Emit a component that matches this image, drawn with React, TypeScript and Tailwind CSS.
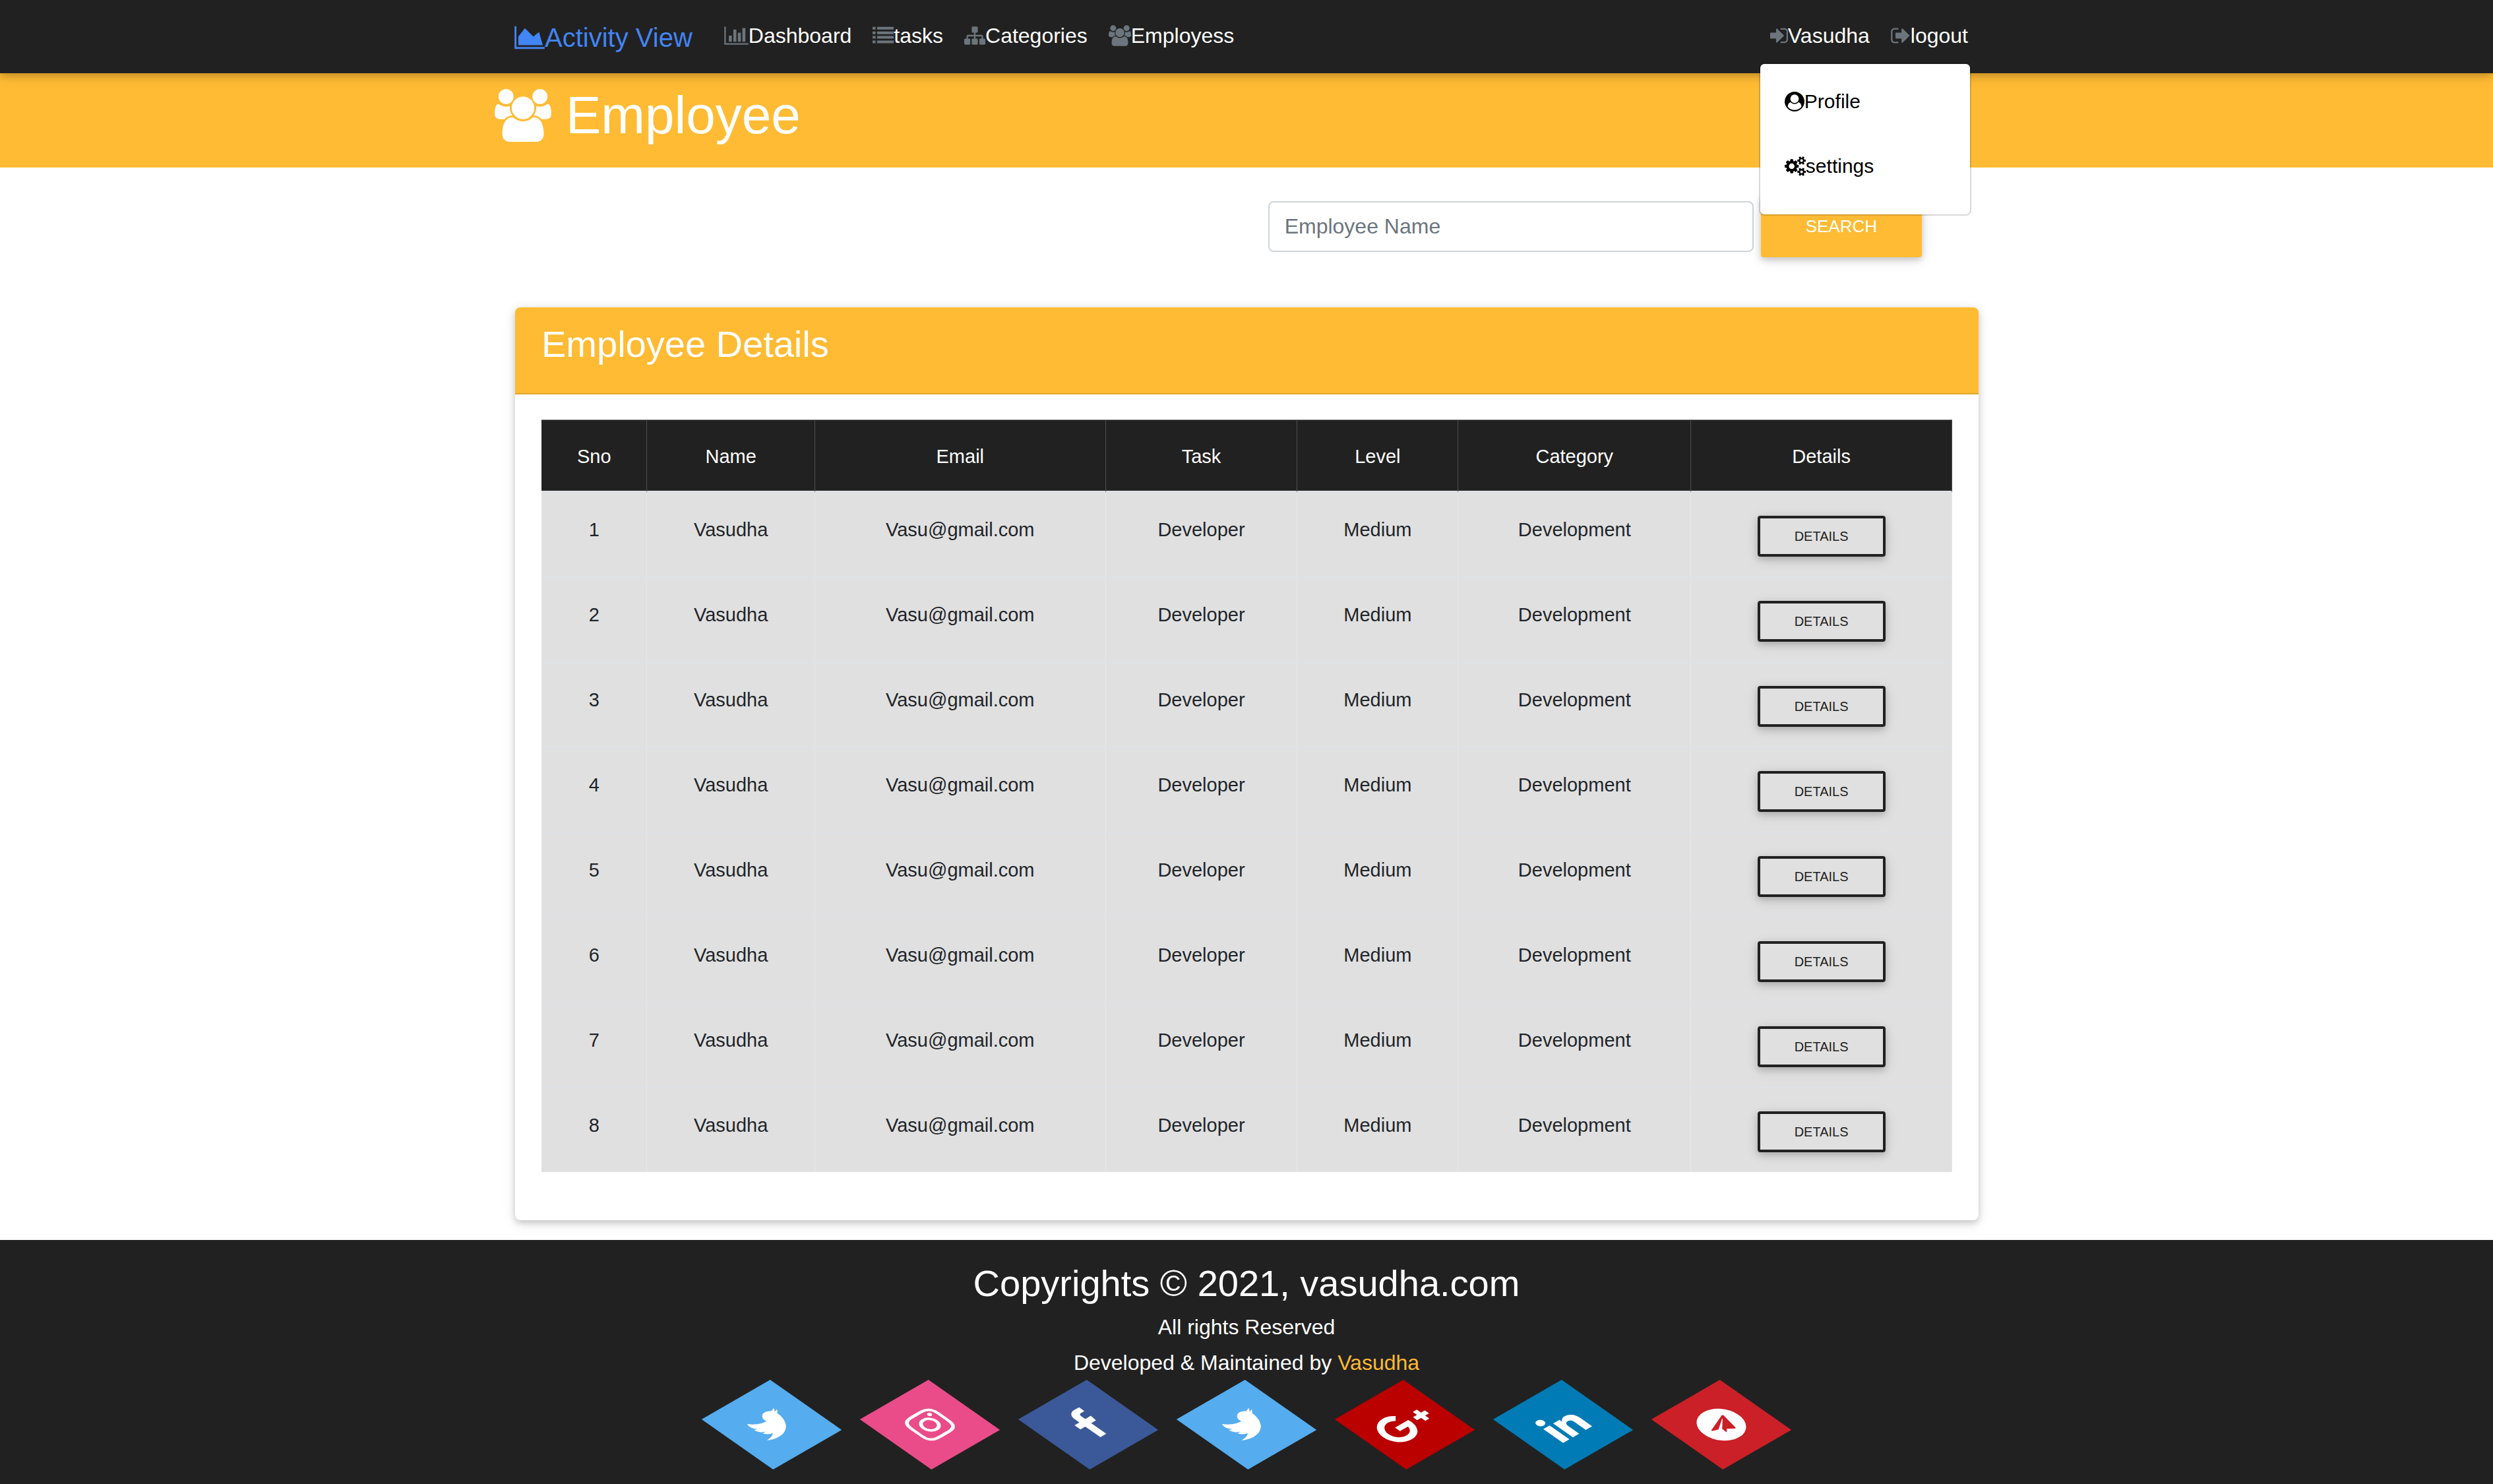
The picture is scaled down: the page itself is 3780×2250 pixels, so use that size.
type IconProps = { viewBox: string; d: string; className: string };

function Icon({ viewBox, d, className }: IconProps) {
  return (
    <svg viewBox={viewBox} className={className} fill="currentColor" aria-hidden="true">
      <path d={d} />
    </svg>
  );
}

const AREA =
  "M2048 1536v128h-2048v-1536h128v1408h1920zm-384-1024l256 896h-1664v-576l448-576 576 576z";
const BARS =
  "M640 896v512h-256v-512h256zm384-512v1024h-256v-1024h256zm1024 1152v128h-2048v-1536h128v1408h1920zm-640-896v768h-256v-768h256zm384-384v1152h-256v-1152h256z";
const LIST =
  "M0 160h256v224h-256zM384 160h1408v224h-1408zM0 544h256v224h-256zM384 544h1408v224h-1408zM0 928h256v224h-256zM384 928h1408v224h-1408zM0 1312h256v224h-256zM384 1312h1408v224h-1408z";
const SITEMAP =
  "M1792 1248v320q0 40-28 68t-68 28h-320q-40 0-68-28t-28-68v-320q0-40 28-68t68-28h96v-192h-512v192h96q40 0 68 28t28 68v320q0 40-28 68t-68 28h-320q-40 0-68-28t-28-68v-320q0-40 28-68t68-28h96v-192h-512v192h96q40 0 68 28t28 68v320q0 40-28 68t-68 28h-320q-40 0-68-28t-28-68v-320q0-40 28-68t68-28h96v-192q0-52 38-90t90-38h512v-192h-96q-40 0-68-28t-28-68v-320q0-40 28-68t68-28h320q40 0 68 28t28 68v320q0 40-28 68t-68 28h-96v192h512q52 0 90 38t38 90v192h96q40 0 68 28t28 68z";
const USERS =
  "M593 896q-162 5-265 128h-134q-82 0-138-40.5t-56-118.5q0-353 124-353 6 0 43.5 21t97.5 42.5 119 21.5q67 0 133-23-5 37-5 66 0 139 81 256zm1071 637q0 120-73 189.5t-194 69.5h-874q-121 0-194-69.5t-73-189.5q0-53 3.5-103.5t14-109 26.5-108.5 43-97.5 62-81 85.5-53.5 111.5-20q10 0 43 21.5t73 48 107 48 135 21.5 135-21.5 107-48 73-48 43-21.5q61 0 111.5 20t85.5 53.5 62 81 43 97.5 26.5 108.5 14 109 3.5 103.5zm-1024-1277q0 106-75 181t-181 75-181-75-75-181 75-181 181-75 181 75 75 181zm704 384q0 159-112.5 271.5t-271.5 112.5-271.5-112.5-112.5-271.5 112.5-271.5 271.5-112.5 271.5 112.5 112.5 271.5zm576 225q0 78-56 118.5t-138 40.5h-134q-103-123-265-128 81-117 81-256 0-29-5-66 66 23 133 23 59 0 119-21.5t97.5-42.5 43.5-21q124 0 124 353zm-128-609q0 106-75 181t-181 75-181-75-75-181 75-181 181-75 181 75 75 181z";
const SIGN_IN =
  "M1312 896q0 26-19 45l-544 544q-19 19-45 19t-45-19-19-45v-288h-448q-26 0-45-19t-19-45v-384q0-26 19-45t45-19h448v-288q0-26 19-45t45-19 45 19l544 544q19 19 19 45zm352-352v704q0 119-84.5 203.5t-203.5 84.5h-320q-13 0-22.5-9.5t-9.5-22.5q0-4-1-20t-.5-26.5 3-23.5 10-19.5 20.5-6.5h320q66 0 113-47t47-113v-704q0-66-47-113t-113-47h-312l-11.5-1-11.5-3-8-5.5-7-9-2-13.5q0-4-1-20t-.5-26.5 3-23.5 10-19.5 20.5-6.5h320q119 0 203.5 84.5t84.5 203.5z";
const SIGN_OUT =
  "M704 1440q0 4 1 20t.5 26.5-3 23.5-10 19.5-20.5 6.5h-320q-119 0-203.5-84.5t-84.5-203.5v-704q0-119 84.5-203.5t203.5-84.5h320q13 0 22.5 9.5t9.5 22.5q0 4 1 20t.5 26.5-3 23.5-10 19.5-20.5 6.5h-320q-66 0-113 47t-47 113v704q0 66 47 113t113 47h312l11.5 1 11.5 3 8 5.5 7 9 2 13.5zm928-544q0 26-19 45l-544 544q-19 19-45 19t-45-19-19-45v-288h-448q-26 0-45-19t-19-45v-384q0-26 19-45t45-19h448v-288q0-26 19-45t45-19 45 19l544 544q19 19 19 45z";
const USER_CIRCLE =
  "M1523 1339q-22-155-87.5-257.5t-184.5-118.5q-67 74-159.5 115.5t-195.5 41.5-195.5-41.5-159.5-115.5q-119 16-184.5 118.5t-87.5 257.5q106 150 271 237.5t356 87.5 356-87.5 271-237.5zm-243-699q0-159-112.5-271.5t-271.5-112.5-271.5 112.5-112.5 271.5 112.5 271.5 271.5 112.5 271.5-112.5 112.5-271.5zm512 256q0 182-71 347.5t-190.5 286-285.5 191.5-349 71-349-71-285.5-191.5-190.5-286-71-347.5 71-348 191-286 286-191 348-71 348 71 286 191 191 286 71 348z";
const COGS =
  "M896 896q0-106-75-181t-181-75-181 75-75 181 75 181 181 75 181-75 75-181zm768 512q0-52-38-90t-90-38-90 38-38 90q0 53 37.5 90.5t90.5 37.5 90.5-37.5 37.5-90.5zm0-1024q0-52-38-90t-90-38-90 38-38 90q0 53 37.5 90.5t90.5 37.5 90.5-37.5 37.5-90.5zm-384 421v185q0 10-7 19.5t-16 10.5l-155 24q-11 35-32 76 34 48 90 115 7 11 7 20 0 12-7 19-23 30-82.5 89.5t-78.5 59.5q-11 0-21-7l-115-90q-37 19-77 31-11 108-23 155-7 24-30 24h-186q-11 0-20-7.5t-10-17.5l-23-153q-34-10-75-31l-118 89q-7 7-20 7-11 0-21-8-144-133-144-160 0-9 7-19 10-14 41-53t47-61q-23-44-35-82l-152-24q-10-1-17-9.5t-7-19.5v-185q0-10 7-19.5t16-10.5l155-24q11-35 32-76-34-48-90-115-7-11-7-20 0-12 7-20 22-30 82-89t79-59q11 0 21 7l115 90q34-18 77-32 11-108 23-154 7-24 30-24h186q11 0 20 7.5t10 17.5l23 153q34 10 75 31l118-89q8-7 20-7 11 0 21 8 144 133 144 160 0 8-7 19-12 16-42 54t-45 60q23 48 34 82l152 23q10 2 17 10.5t7 19.5zm640 533v140q0 16-149 31-12 27-30 52 51 113 51 138 0 4-4 7-122 71-124 71-8 0-46-47t-52-68q-20 2-30 2t-30-2q-14 21-52 68t-46 47q-2 0-124-71-4-3-4-7 0-25 51-138-18-25-30-52-149-15-149-31v-140q0-16 149-31 13-29 30-52-51-113-51-138 0-4 4-7 4-2 35-20t59-34 30-16q8 0 46 46.5t52 67.5q20-2 30-2t30 2q51-71 92-112l6-2q4 0 124 70 4 3 4 7 0 25-51 138 17 23 30 52 149 15 149 31zm0-1024v140q0 16-149 31-12 27-30 52 51 113 51 138 0 4-4 7-122 71-124 71-8 0-46-47t-52-68q-20 2-30 2t-30-2q-14 21-52 68t-46 47q-2 0-124-71-4-3-4-7 0-25 51-138-18-25-30-52-149-15-149-31v-140q0-16 149-31 13-29 30-52-51-113-51-138 0-4 4-7 4-2 35-20t59-34 30-16q8 0 46 46.5t52 67.5q20-2 30-2t30 2q51-71 92-112l6-2q4 0 124 70 4 3 4 7 0 25-51 138 17 23 30 52 149 15 149 31z";
const TWITTER =
  "M1684 408q-67 98-162 167 1 14 1 42 0 130-38 259.5t-115.5 248.5-184.5 210.5-258 146-323 54.5q-271 0-496-145 35 4 78 4 225 0 401-138-105-2-188-64.5t-114-159.5q33 5 61 5 43 0 85-11-112-23-185.5-111.5t-73.5-205.5v-4q68 38 146 41-66-44-105-115t-39-154q0-88 44-163 121 149 294.5 238.5t371.5 99.5q-8-38-8-74 0-134 94.5-228.5t228.5-94.5q140 0 236 102 109-21 205-78-37 115-142 178 93-10 186-50z";
const INSTAGRAM =
  "M1152 896q0-106-75-181t-181-75-181 75-75 181 75 181 181 75 181-75 75-181zm138 0q0 164-115 279t-279 115-279-115-115-279 115-279 279-115 279 115 115 279zm108-410q0 38-27 65t-65 27-65-27-27-65 27-65 65-27 65 27 27 65zm-502-220q-7 0-76.5-.5t-105.5 0-96.5 3-103 10-71.5 18.5q-50 20-88 58t-58 88q-11 29-18.5 71.5t-10 103-3 96.5 0 105.5.5 76.5-.5 76.5 0 105.5 3 96.5 10 103 18.5 71.5q20 50 58 88t88 58q29 11 71.5 18.5t103 10 96.5 3 105.5 0 76.5-.5 76.5.5 105.5 0 96.5-3 103-10 71.5-18.5q50-20 88-58t58-88q11-29 18.5-71.5t10-103 3-96.5 0-105.5-.5-76.5.5-76.5 0-105.5-3-96.5-10-103-18.5-71.5q-20-50-58-88t-88-58q-29-11-71.5-18.5t-103-10-96.5-3-105.5 0-76.5.5zm768 630q0 229-5 317-10 208-124 322t-322 124q-88 5-317 5t-317-5q-208-10-322-124t-124-322q-5-88-5-317t5-317q10-208 124-322t322-124q88-5 317-5t317 5q208 10 322 124t124 322q5 88 5 317z";
const FACEBOOK =
  "M1343 12v264h-157q-86 0-116 36t-30 108v189h293l-39 296h-254v759h-306v-759h-255v-296h255v-218q0-186 104-288.5t277-102.5q147 0 228 12z";
const GOOGLE_PLUS =
  "M1437 913q0 208-87 370.5t-248 254-369 91.5q-149 0-285-58t-234-156-156-234-58-285 58-285 156-234 234-156 285-58q286 0 491 192l-199 191q-117-113-292-113-123 0-227.5 62t-165.5 168.5-61 232.5 61 232.5 165.5 168.5 227.5 62q83 0 152.5-23t114.5-57.5 78.5-78.5 49-83 21.5-74h-416v-252h692q12 63 12 122zm867-122v210h-209v209h-210v-209h-209v-210h209v-209h210v209h209z";
const LINKEDIN =
  "M477 625v991h-330v-991h330zm21-306q1 73-50.5 122t-135.5 49h-2q-82 0-132-49t-50-122q0-74 51.5-122.5t134.5-48.5 133 48.5 51 122.5zm1166 729v568h-329v-530q0-105-40.5-164.5t-126.5-59.5q-63 0-105.5 34.5t-63.5 85.5q-11 30-11 81v553h-329q2-399 2-647t-1-296l-1-48h329v144h-2q20-32 41-56t56.5-52 87-43.5 114.5-15.5q171 0 275 113.5t104 332.5z";
const TELEGRAM =
  "M1189 1307l147-693q9-44-10.5-63t-51.5-7l-864 333q-29 11-39.5 25t-2.5 26.5 32 19.5l221 69 513-323q21-14 32-6 7 5-4 15l-415 375-16 228q23 0 45-22l108-104 224 165q64 36 81-38zm603-411q0 182-71 348t-191 286-286 191-348 71-348-71-286-191-191-286-71-348 71-348 191-286 286-191 348-71 348 71 286 191 191 286 71 348z";

const navLinks = [
  { label: "Dashboard", viewBox: "0 0 2048 1792", d: BARS, size: "h-8 w-[37px] text-[#6c757d]" },
  { label: "tasks", viewBox: "0 0 1792 1792", d: LIST, size: "h-8 w-8 text-[#6c757d]" },
  { label: "Categories", viewBox: "0 0 1792 1792", d: SITEMAP, size: "h-8 w-8 text-[#6c757d]" },
  { label: "Employess", viewBox: "0 0 1920 1792", d: USERS, size: "h-8 w-[34px] text-[#6c757d]" },
];

const columns = [
  { label: "Sno", width: "w-[7.5%]" },
  { label: "Name", width: "w-[11.9%]" },
  { label: "Email", width: "w-[20.6%]" },
  { label: "Task", width: "w-[13.6%]" },
  { label: "Level", width: "w-[11.4%]" },
  { label: "Category", width: "w-[16.5%]" },
  { label: "Details", width: "w-[18.5%]" },
];

const employees = [1, 2, 3, 4, 5, 6, 7, 8].map((sno) => ({
  sno,
  name: "Vasudha",
  email: "Vasu@gmail.com",
  task: "Developer",
  level: "Medium",
  category: "Development",
}));

const socials = [
  { label: "Twitter", viewBox: "0 0 1792 1792", d: TWITTER, color: "bg-[#55acee]", size: "h-[60px] w-[60px]" },
  { label: "Instagram", viewBox: "0 0 1792 1792", d: INSTAGRAM, color: "bg-[#ea4c89]", size: "h-[60px] w-[60px]" },
  { label: "Facebook", viewBox: "0 0 1792 1792", d: FACEBOOK, color: "bg-[#3b5998]", size: "h-[60px] w-[60px]" },
  { label: "Twitter news", viewBox: "0 0 1792 1792", d: TWITTER, color: "bg-[#55acee]", size: "h-[60px] w-[60px]" },
  { label: "Google Plus", viewBox: "0 0 2304 1792", d: GOOGLE_PLUS, color: "bg-[#bb0000]", size: "h-[60px] w-[77px]" },
  { label: "LinkedIn", viewBox: "0 0 1792 1792", d: LINKEDIN, color: "bg-[#007bb5]", size: "h-[60px] w-[60px]" },
  { label: "Telegram", viewBox: "0 0 1792 1792", d: TELEGRAM, color: "bg-[#cb2027]", size: "h-[60px] w-[60px]" },
];

function Navbar() {
  return (
    <header className="relative z-10 bg-[#212121] shadow-[0_4px_10px_rgba(0,0,0,0.16),0_4px_20px_rgba(0,0,0,0.12)]">
      <nav className="mx-auto flex w-full max-w-[2280px] items-start px-[30px] pb-6 text-[32px] leading-[48px] text-white">
        <a href="#" className="mr-8 flex items-center pt-[27px] text-[40px] leading-[60px] text-[#4285f4]">
          <Icon viewBox="0 0 2048 1792" d={AREA} className="h-10 w-[46px]" />
          Activity View
        </a>
        <ul className="flex pt-[30px]">
          {navLinks.map((l) => (
            <li key={l.label} className="px-4">
              <a href="#" className="flex items-center">
                <Icon viewBox={l.viewBox} d={l.d} className={l.size} />
                {l.label}
              </a>
            </li>
          ))}
        </ul>
        <ul className="ml-auto flex pt-[30px]">
          <li className="relative px-4">
            <button type="button" aria-expanded="true" className="flex items-center">
              <Icon viewBox="128 0 1536 1792" d={SIGN_IN} className="h-8 w-[27px] text-[#6c757d]" />
              Vasudha
            </button>
            <div className="absolute top-[65px] -left-px w-[322px] rounded-lg border-2 border-black/15 bg-white bg-clip-padding pt-2 pb-6 text-[30px] leading-[98px] text-black">
              <a href="#" className="flex items-center px-[37px]">
                <Icon viewBox="0 0 1792 1792" d={USER_CIRCLE} className="h-[30px] w-[30px]" />
                Profile
              </a>
              <a href="#" className="flex items-center px-[37px]">
                <Icon viewBox="0 0 1920 1792" d={COGS} className="h-[30px] w-8" />
                settings
              </a>
            </div>
          </li>
          <li className="px-4">
            <a href="#" className="flex items-center">
              <Icon viewBox="64 0 1664 1792" d={SIGN_OUT} className="h-8 w-[30px] text-[#6c757d]" />
              logout
            </a>
          </li>
        </ul>
      </nav>
    </header>
  );
}

function EmployeeTable() {
  return (
    <table className="w-full table-fixed border-separate border-spacing-0 text-center text-[29px]">
      <thead className="bg-[#212121] text-white">
        <tr>
          {columns.map((c) => (
            <th
              key={c.label}
              scope="col"
              className={`${c.width} border-t border-r border-b-[3px] border-t-[#8a8a8a] border-r-[#4d4d4d] border-b-[#dfe0e5] pt-[33px] pb-[30px] leading-[44px] font-normal`}
            >
              {c.label}
            </th>
          ))}
        </tr>
      </thead>
      <tbody className="bg-[#e0e0e0] leading-[42px] text-[#212529] [&_td]:border-r [&_td]:border-b-2 [&_td]:border-r-[#e8e8e8] [&_td]:border-b-[#dee2e6] [&_td]:pt-[35px] [&_td]:pb-[30px] [&_td]:align-top [&_tr:last-child_td]:border-b-0">
        {employees.map((e) => (
          <tr key={e.sno}>
            <td>{e.sno}</td>
            <td>{e.name}</td>
            <td>{e.email}</td>
            <td>{e.task}</td>
            <td>{e.level}</td>
            <td>{e.category}</td>
            <td>
              <button
                type="button"
                className="mx-auto block rounded border-4 border-[#212121] px-[52px] py-3 text-[20px] leading-[30px] text-[#212121] uppercase shadow-[0_4px_10px_rgba(0,0,0,0.16),0_4px_20px_rgba(0,0,0,0.12)]"
              >
                Details
              </button>
            </td>
          </tr>
        ))}
      </tbody>
    </table>
  );
}

export default function App() {
  return (
    <div className="min-h-screen bg-white font-['Liberation_Sans',Arial,sans-serif]">
      <Navbar />

      <div className="bg-[#ffbb33] pt-4 pb-[31px] text-white">
        <h1 className="mx-auto flex w-full max-w-[2280px] items-center gap-[22px] text-[80px] leading-[96px]">
          <Icon viewBox="0 0 1920 1792" d={USERS} className="h-20 w-[86px]" />
          Employee
        </h1>
      </div>

      <main className="mx-auto w-full max-w-[2280px] pr-[30px] pb-[30px] pl-[31px]">
        <form className="flex items-center justify-end gap-[11px] pt-[43px] pr-[86px]">
          <input
            type="text"
            aria-label="Employee Name"
            placeholder="Employee Name"
            className="h-[77px] w-[736px] rounded-lg border-2 border-[#ced4da] px-[23px] text-[32px] placeholder:text-[#6c757d]"
          />
          <button
            type="button"
            className="rounded bg-[#ffbb33] px-[68px] py-[27px] text-[26px] leading-[39px] text-white uppercase shadow-[0_4px_10px_rgba(0,0,0,0.16),0_4px_20px_rgba(0,0,0,0.12)]"
          >
            Search
          </button>
        </form>

        <section className="mt-[76px] rounded-lg bg-white shadow-[0_4px_10px_rgba(0,0,0,0.16),0_4px_20px_rgba(0,0,0,0.12)]">
          <h2 className="rounded-t-lg border-b-2 border-[#dfa42d] bg-[#ffbb33] px-10 pt-[22px] pb-10 text-[56px] leading-[68px] text-white">
            Employee Details
          </h2>
          <div className="px-10 pt-[38px] pb-[73px]">
            <EmployeeTable />
          </div>
        </section>
      </main>

      <footer className="bg-[#212121] pt-8 pb-[30px] text-center text-[32px] leading-[48px] text-white">
        <h3 className="text-[56px] leading-[68px]">Copyrights © 2021, vasudha.com</h3>
        <p className="mt-2">All rights Reserved</p>
        <p className="mt-[6px]">
          Developed &amp; Maintained by{" "}
          <a href="#" className="text-[#ffbb33]">
            Vasudha
          </a>
        </p>
        <ul className="mt-[10px] flex justify-center gap-[120px]">
          {socials.map((s) => (
            <li key={s.label}>
              <a
                href="#"
                aria-label={s.label}
                className={`${s.color} flex h-[120px] w-[120px] [transform:rotate(-30deg)_skewX(25deg)] items-center justify-center`}
              >
                <Icon viewBox={s.viewBox} d={s.d} className={s.size} />
              </a>
            </li>
          ))}
        </ul>
      </footer>
    </div>
  );
}
